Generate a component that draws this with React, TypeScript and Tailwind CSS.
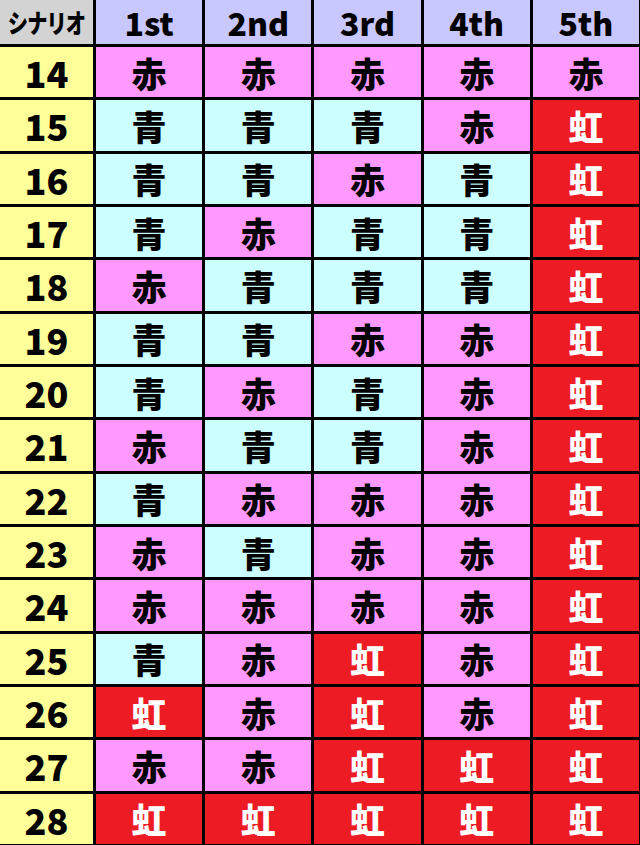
const heads = ['1st', '2nd', '3rd', '4th', '5th'];

const rows: [number, string][] = [
  [14, '赤赤赤赤赤'],
  [15, '青青青赤虹'],
  [16, '青青赤青虹'],
  [17, '青赤青青虹'],
  [18, '赤青青青虹'],
  [19, '青青赤赤虹'],
  [20, '青赤青赤虹'],
  [21, '赤青青赤虹'],
  [22, '青赤赤赤虹'],
  [23, '赤青赤赤虹'],
  [24, '赤赤赤赤虹'],
  [25, '青赤虹赤虹'],
  [26, '虹赤虹赤虹'],
  [27, '赤赤虹虹虹'],
  [28, '虹虹虹虹虹'],
];

// 色ごとのセル
const cellCls: Record<string, string> = {
  赤: 'bg-[#ff99ff] text-black',
  青: 'bg-[#ccffff] text-black',
  虹: 'bg-[#ed1c24] text-white',
};

const font = { fontFamily: '"Noto Sans CJK JP", "Noto Sans", sans-serif' };

export default function App() {
  return (
    <div
      className="grid h-[845px] w-[640px] grid-cols-[93px_repeat(5,1fr)] grid-rows-[44px_repeat(15,1fr)] gap-[3px] bg-black pr-px pb-px font-black"
      style={font}
    >
      <div className="flex items-center justify-center overflow-hidden bg-[#d3d3d3]">
        <span className="inline-block shrink-0 scale-x-[0.78] whitespace-nowrap text-[26px] leading-none tracking-tighter text-black">
          シナリオ
        </span>
      </div>
      {heads.map((h) => (
        <div key={h} className="flex items-center justify-center bg-[#c8c8ff] text-[32px] leading-none text-black">
          {h}
        </div>
      ))}
      {rows.map(([n, s]) => (
        <>
          <div key={`n${n}`} className="flex items-center justify-center bg-[#ffff99] text-[36px] leading-none text-black">
            {n}
          </div>
          {s.split('').map((c, i) => (
            <div key={`${n}-${i}`} className={`flex items-center justify-center text-[35px] leading-none ${cellCls[c]}`}>
              {c}
            </div>
          ))}
        </>
      ))}
    </div>
  );
}
